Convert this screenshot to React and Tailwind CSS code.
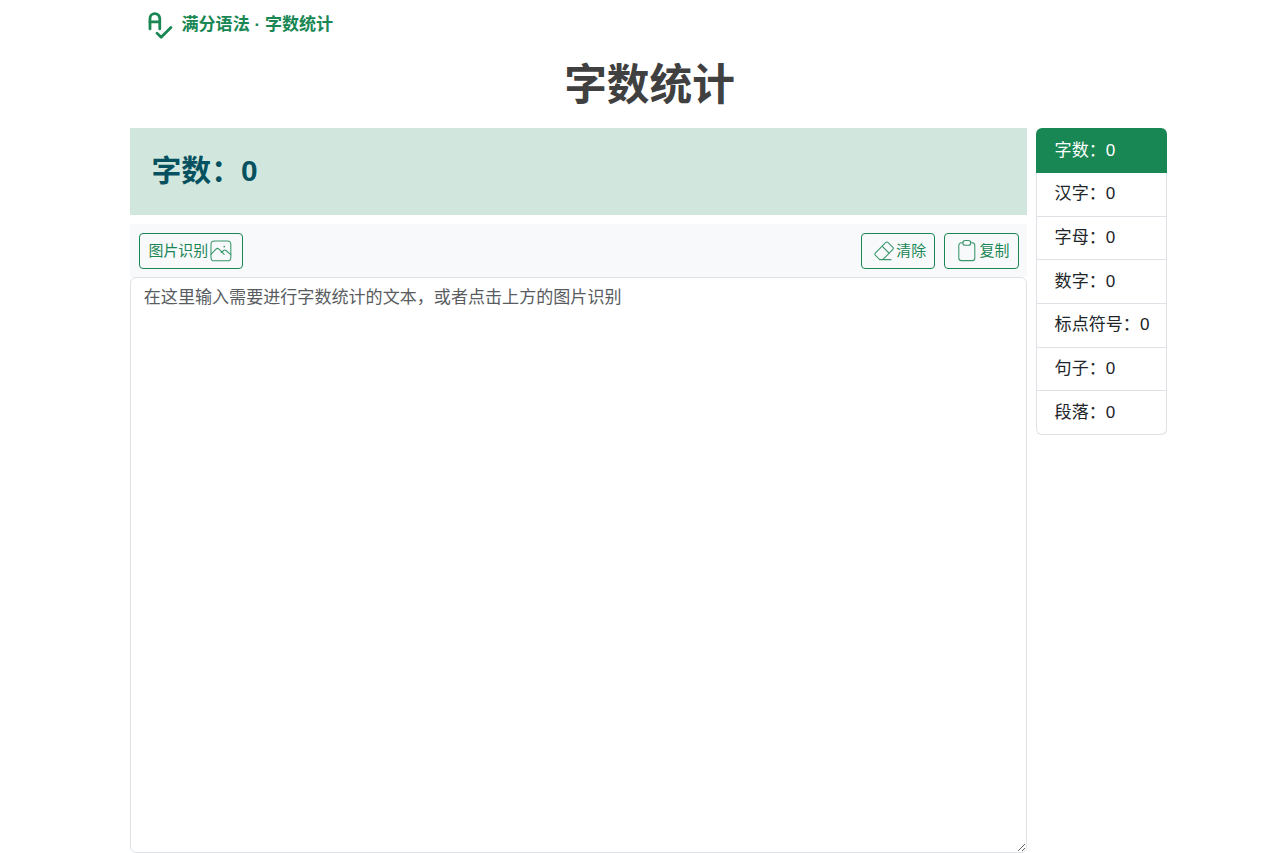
import { useState } from 'react';
import { TbTextSpellcheck } from 'react-icons/tb';

const countMatches = (text, pattern) => (text.match(pattern) || []).length;

function getStats(text) {
  return [
    { label: '字数', value: countMatches(text, /\p{Script=Han}|[A-Za-z]+|\d+/gu) },
    { label: '汉字', value: countMatches(text, /\p{Script=Han}/gu) },
    { label: '字母', value: countMatches(text, /[A-Za-z]/g) },
    { label: '数字', value: countMatches(text, /\d/g) },
    { label: '标点符号', value: countMatches(text, /\p{P}/gu) },
    { label: '句子', value: countMatches(text, /[^。！？.!?\n]+/g) },
    { label: '段落', value: countMatches(text, /[^\n]+/g) },
  ];
}

function ThinIcon({ children }) {
  return (
    <svg
      viewBox="0 0 24 24"
      fill="none"
      stroke="currentColor"
      strokeLinecap="round"
      strokeLinejoin="round"
      className="size-[25.6px] shrink-0 opacity-85"
    >
      {children}
    </svg>
  );
}

const ImageIcon = () => (
  <ThinIcon>
    <rect x="2.8" y="2.8" width="18.6" height="18.6" rx="3.2" />
    <path d="M2.8 15.4l4.9-5.1q1.2-1.1 2.4 0l5 5.1M12.4 13.6l2.3-1.9q1.1-.8 2.1 0l4.6 3.9" />
    <circle cx="15.2" cy="8" r=".8" fill="currentColor" stroke="none" />
  </ThinIcon>
);

const EraserIcon = () => (
  <ThinIcon>
    <path d="M8.2 20.3l-4-4a1.7 1.7 0 0 1 0-2.4l9.5-9.5a1.7 1.7 0 0 1 2.4 0l4.2 4.2a1.7 1.7 0 0 1 0 2.4l-9.3 9.3M10.4 7.7l6.6 6.6M8.2 20.3h10.5" />
  </ThinIcon>
);

const ClipboardIcon = () => (
  <ThinIcon>
    <path d="M8.3 4.5H7A2.5 2.5 0 0 0 4.5 7v11.7A2.5 2.5 0 0 0 7 21.2h10a2.5 2.5 0 0 0 2.5-2.5V7A2.5 2.5 0 0 0 17 4.5h-1.3" />
    <rect x="8.3" y="2.4" width="7.4" height="4.4" rx="2.2" />
  </ThinIcon>
);

function ToolButton({ children, onClick }) {
  return (
    <button
      type="button"
      onClick={onClick}
      className="flex h-9 items-center rounded border border-[#198754] pr-[8.2px] pl-[9px] text-[14.93px] text-[#198754]"
    >
      {children}
    </button>
  );
}

export default function App() {
  const [text, setText] = useState('');
  const stats = getStats(text);

  return (
    <div className="flex h-[853px] flex-col overflow-hidden bg-white pl-[130px] font-['Liberation_Sans','Noto_Sans_CJK_SC',sans-serif] text-[17.07px] leading-[25.6px] text-[#212529]">
      <header className="flex h-12 shrink-0 items-center gap-[5px] pl-[13px] font-bold text-[#198754]">
        <TbTextSpellcheck className="mt-0.5 size-[33.5px]" />
        <span className="pt-0.5">满分语法 · 字数统计</span>
      </header>

      <h1 className="h-20 w-[1039px] shrink-0 pt-3 text-center text-[42.67px] leading-[51.2px] font-bold text-[#404040]">
        字数统计
      </h1>

      <div className="flex min-h-0 flex-1 gap-[9px]">
        <main className="flex w-[897px] flex-col">
          <h3 className="mb-[8.5px] flex h-[87.4px] shrink-0 items-center bg-[#d1e7dd] pb-[2px] pl-[21.5px] text-[29.87px] font-bold text-[#055160]">
            {stats[0].label}：{stats[0].value}
          </h3>
          <div className="flex h-[53.5px] shrink-0 items-center gap-[8.5px] bg-[#f8f9fa] px-[8.5px] pt-px">
            <ToolButton>
              图片识别
              <ImageIcon />
            </ToolButton>
            <div className="grow" />
            <ToolButton onClick={() => setText('')}>
              <EraserIcon />
              清除
            </ToolButton>
            <ToolButton onClick={() => navigator.clipboard?.writeText(text)}>
              <ClipboardIcon />
              复制
            </ToolButton>
          </div>
          <textarea
            value={text}
            onChange={(e) => setText(e.target.value)}
            placeholder="在这里输入需要进行字数统计的文本，或者点击上方的图片识别"
            className="block w-full flex-1 resize-y rounded-md border border-[#dee2e6] px-[12.8px] py-[7px] outline-none placeholder:text-[#595c5f]"
          />
        </main>

        <ul className="w-[131px] self-start">
          {stats.map(({ label, value }, i) => (
            <li
              key={label}
              className={
                i === 0
                  ? 'h-[44.8px] rounded-t-md bg-[#198754] pt-[9.6px] pl-[18.6px] text-white'
                  : 'h-[43.73px] border-x border-b border-[#dee2e6] pt-[8.5px] pl-[17.6px] last:rounded-b-md'
              }
            >
              {label}：{value}
            </li>
          ))}
        </ul>
      </div>
    </div>
  );
}
